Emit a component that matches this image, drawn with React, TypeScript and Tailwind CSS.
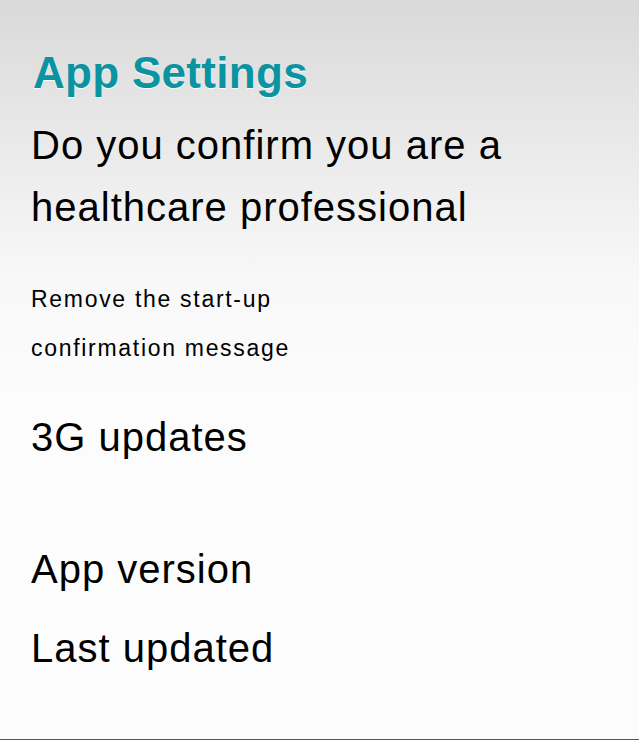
import React from "react";

const rows = ["App version", "Last updated"];

const App: React.FC = () => {
  return (
    <div className="h-screen flex flex-col border-b border-[#555555] bg-[linear-gradient(to_bottom,#d9d9d9_0px,#e8e8e8_130px,#f8f8f8_280px,#fcfcfc_400px,#fcfcfc_100%)] font-['Liberation_Sans',Arial,sans-serif] text-black pl-[31px] pr-6">
      {/* header */}
      <h1 className="mt-[48px] ml-[2px] text-[44px] leading-[50px] font-bold tracking-[0.3px] text-[#0a93a0] [text-shadow:0_1px_1px_#ffffff]">
        App Settings
      </h1>

      <div className="mt-[16px] text-[40px] leading-[62px] tracking-[1px]">
        <p>Do you confirm you are a</p>
        <p>healthcare professional</p>
      </div>

      <div className="mt-[37px] text-[23px] leading-[49px] tracking-[1.7px]">
        <p>Remove the start-up</p>
        <p>confirmation message</p>
      </div>

      <p className="mt-[33px] text-[40px] leading-[62px] tracking-[1px]">
        3G updates
      </p>

      <div className="mt-[70px] flex flex-col gap-[17px] text-[40px] leading-[62px] tracking-[1px]">
        {rows.map((r) => (
          <p key={r}>{r}</p>
        ))}
      </div>
    </div>
  );
};

export default App;
